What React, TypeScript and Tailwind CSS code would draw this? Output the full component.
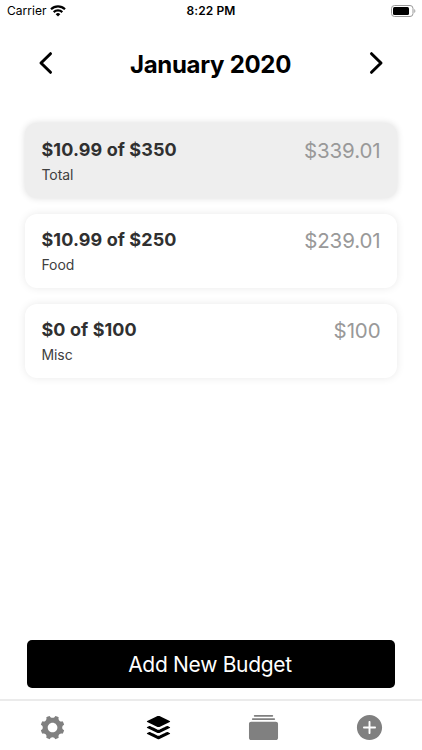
import { IoIosSettings, IoLogoBuffer, IoIosAlbums, IoIosAddCircle } from 'react-icons/io';

type Budget = { name: string; summary: string; left: string; total?: boolean };

const budgets: Budget[] = [
  { name: 'Total', summary: '$10.99 of $350', left: '$339.01', total: true },
  { name: 'Food', summary: '$10.99 of $250', left: '$239.01' },
  { name: 'Misc', summary: '$0 of $100', left: '$100' },
];

function StatusBar() {
  return (
    <div className="grid h-[22px] grid-cols-3 items-center pl-[7px] pr-[6px] text-[12px] leading-[22px] text-black">
      <div className="flex items-center gap-[4px]">
        <span className="tracking-[0.02px]">Carrier</span>
        <svg width="16" height="12" viewBox="0 0 16 12" fill="none" stroke="#000" strokeWidth="2.2">
          <path d="M1 4.2a10 10 0 0 1 14 0" />
          <path d="M3.7 7.1a6.2 6.2 0 0 1 8.6 0" />
          <path d="M8 11.6 5.7 9.2a3.3 3.3 0 0 1 4.6 0z" fill="#000" stroke="none" />
        </svg>
      </div>
      <span className="pr-[1px] text-center font-semibold tracking-[0.08px]">8:22 PM</span>
      <svg className="justify-self-end" width="25" height="12" viewBox="0 0 25 12">
        <rect x="0.5" y="0.5" width="21.5" height="11" rx="3" fill="none" stroke="#999" />
        <rect x="2" y="2" width="16" height="8" rx="1.5" fill="#000" />
        <path d="M23.3 4v4c1.4-.6 1.4-3.4 0-4z" fill="#999" />
      </svg>
    </div>
  );
}

function Chevron({ right = false }: { right?: boolean }) {
  return (
    <svg width="15" height="24" viewBox="0 0 15 24" fill="none" stroke="#000" strokeWidth="3" strokeLinecap="round" strokeLinejoin="round">
      <path d={right ? 'M2.5 2.7 12 12 2.5 21.3' : 'M12.5 2.7 3 12l9.5 9.3'} />
    </svg>
  );
}

function BudgetCard({ budget }: { budget: Budget }) {
  return (
    <div
      className={`flex justify-between rounded-[12px] pl-[16.5px] pr-[16.5px] ${
        budget.total
          ? 'h-[75px] bg-[#eeeeee] pt-[15px] shadow-[0_0_7px_rgba(0,0,0,0.14)]'
          : 'h-[74px] bg-white pt-[14px] shadow-[0_0_8px_rgba(0,0,0,0.09)]'
      }`}
    >
      <div>
        <div className="text-[18px] font-bold leading-[24px] tracking-[0.08px] text-[#303030]">{budget.summary}</div>
        <div className="mt-[3px] text-[14px] leading-[20px] tracking-[-0.1px] text-[#404040]">{budget.name}</div>
      </div>
      <div className="text-[20.5px] leading-[25px] tracking-[-0.12px] text-[#999999]">{budget.left}</div>
    </div>
  );
}

export default function App() {
  return (
    <div className="flex h-[750px] w-[422px] flex-col overflow-hidden bg-white font-['Inter','Liberation_Sans',sans-serif]">
      <StatusBar />
      <header className="flex h-[82px] items-center justify-between px-[38px]">
        <button aria-label="Previous month"><Chevron /></button>
        <h1 className="pr-[1px] pt-[3px] text-[24px] font-bold tracking-[-0.3px] text-black">January 2020</h1>
        <button aria-label="Next month"><Chevron right /></button>
      </header>
      <main className="mt-[19px] flex flex-1 flex-col gap-[16px] px-[25px]">
        {budgets.map((b) => <BudgetCard key={b.name} budget={b} />)}
      </main>
      <button className="mx-[27px] mb-[11px] h-[48px] rounded-[5px] bg-black pr-[2px] pt-[1px] text-[21px] tracking-[-0.3px] text-white">Add New Budget</button>
      <nav className="grid h-[51px] grid-cols-4 items-center justify-items-center border-t-2 border-[#ebebeb] pt-[4px] text-[#808080]">
        <IoIosSettings size={31} />
        <IoLogoBuffer size={31} className="text-black" />
        <IoIosAlbums size={31} />
        <IoIosAddCircle size={31} />
      </nav>
    </div>
  );
}
